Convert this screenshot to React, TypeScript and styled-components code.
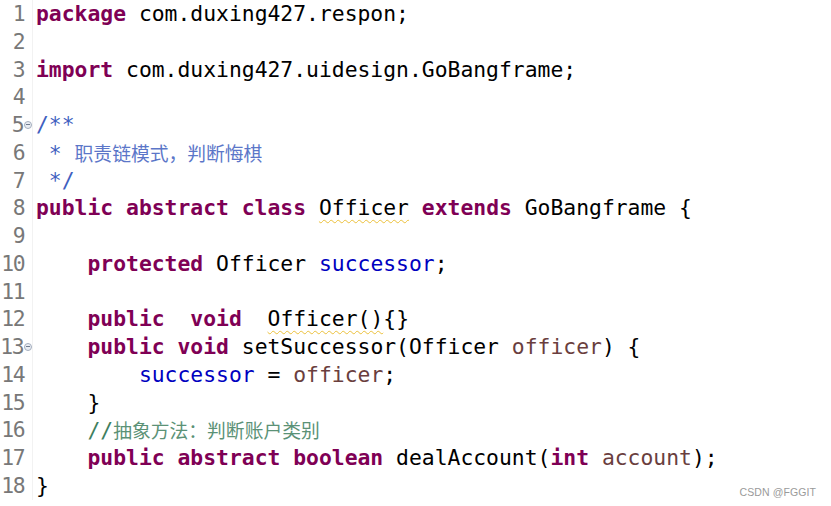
import React from "react";
import styled, { createGlobalStyle } from "styled-components";

const Global = createGlobalStyle`
  html, body { margin: 0; padding: 0; background: #ffffff; }
  body { width: 831px; height: 506px; overflow: hidden; }
`;

type Kind = "plain" | "kw" | "field" | "param" | "doc" | "comment" | "warn";
type Tok = { t: string; k?: Kind; cjk?: boolean };
type LineData = { toks: Tok[]; fold?: boolean };

const lines: LineData[] = [
  { toks: [{ t: "package", k: "kw" }, { t: " com.duxing427.respon;" }] },
  { toks: [] },
  { toks: [{ t: "import", k: "kw" }, { t: " com.duxing427.uidesign.GoBangframe;" }] },
  { toks: [] },
  { fold: true, toks: [{ t: "/**", k: "doc" }] },
  { toks: [{ t: " * ", k: "doc" }, { t: "职责链模式，判断悔棋", k: "doc", cjk: true }] },
  { toks: [{ t: " */", k: "doc" }] },
  {
    toks: [
      { t: "public abstract class", k: "kw" },
      { t: " " },
      { t: "Officer", k: "warn" },
      { t: " " },
      { t: "extends", k: "kw" },
      { t: " GoBangframe {" },
    ],
  },
  { toks: [] },
  { toks: [{ t: "    " }, { t: "protected", k: "kw" }, { t: " Officer " }, { t: "successor", k: "field" }, { t: ";" }] },
  { toks: [] },
  { toks: [{ t: "    " }, { t: "public  void", k: "kw" }, { t: "  " }, { t: "Officer()", k: "warn" }, { t: "{}" }] },
  {
    fold: true,
    toks: [
      { t: "    " },
      { t: "public void", k: "kw" },
      { t: " setSuccessor(Officer " },
      { t: "officer", k: "param" },
      { t: ") {" },
    ],
  },
  { toks: [{ t: "        " }, { t: "successor", k: "field" }, { t: " = " }, { t: "officer", k: "param" }, { t: ";" }] },
  { toks: [{ t: "    }" }] },
  { toks: [{ t: "    " }, { t: "//", k: "comment" }, { t: "抽象方法：判断账户类别", k: "comment", cjk: true }] },
  {
    toks: [
      { t: "    " },
      { t: "public abstract boolean", k: "kw" },
      { t: " dealAccount(" },
      { t: "int", k: "kw" },
      { t: " " },
      { t: "account", k: "param" },
      { t: ");" },
    ],
  },
  { toks: [{ t: "}" }] },
];

const colors: Record<Kind, string> = {
  plain: "#000000",
  kw: "#7f0055",
  field: "#0000c0",
  param: "#6a3e3e",
  doc: "#3f5fbf",
  comment: "#3f7f5f",
  warn: "#000000",
};

const Page = styled.div`
  position: relative;
  width: 831px;
  height: 506px;
  background: #ffffff;
  overflow: hidden;
`;

const Editor = styled.div`
  display: flex;
  flex-direction: column;
  font-family: "DejaVu Sans Mono", "Liberation Mono", monospace;
  font-size: 21.36px;
  line-height: 27.75px;
`;

const Row = styled.div`
  display: flex;
  height: 27.75px;
`;

const Gutter = styled.div`
  display: flex;
  width: 33px;
  flex: none;
  border-right: 1px solid #f2f2f2;
  box-sizing: border-box;
`;

const Num = styled.div`
  width: 24px;
  display: flex;
  justify-content: flex-end;
  color: #787878;
  white-space: pre;
  letter-spacing: -1.5px;
`;

const FoldSlot = styled.div`
  flex: 1;
  display: flex;
  align-items: center;
  padding-left: 1px;
`;

const FoldMark = styled.span`
  width: 8px;
  height: 8px;
  box-sizing: border-box;
  border-radius: 50%;
  border: 1px solid #a3adbd;
  background: #e9edf3;
  position: relative;
  &::after {
    content: "";
    position: absolute;
    left: 1px;
    right: 1px;
    top: 2.5px;
    height: 1px;
    background: #6f7b8f;
  }
`;

const Code = styled.div`
  padding-left: 3px;
  white-space: pre;
`;

const Token = styled.span<{ $kind: Kind; $cjk?: boolean }>`
  color: ${(p) => colors[p.$kind]};
  font-weight: ${(p) => (p.$kind === "kw" ? 700 : 400)};
  ${(p) =>
    p.$cjk
      ? `font-family: "Noto Sans CJK SC", sans-serif; font-size: 18.8px; opacity: 0.85;`
      : ""}
  ${(p) =>
    p.$kind === "warn"
      ? `text-decoration: underline wavy #ebc03a; text-decoration-thickness: 1px; text-underline-offset: 4px;`
      : ""}
`;

const Watermark = styled.div`
  position: absolute;
  right: 15px;
  bottom: 8px;
  font-family: "Liberation Sans", Arial, sans-serif;
  font-size: 10.5px;
  color: #9a9a9a;
  letter-spacing: 0.1px;
`;

export default function App() {
  return (
    <Page>
      <Global />
      <Editor>
        {lines.map((ln, i) => (
          <Row key={i}>
            <Gutter>
              <Num>{i + 1}</Num>
              <FoldSlot>{ln.fold && <FoldMark />}</FoldSlot>
            </Gutter>
            <Code>
              {ln.toks.map((tk, j) => (
                <Token key={j} $kind={tk.k ?? "plain"} $cjk={tk.cjk}>
                  {tk.t}
                </Token>
              ))}
            </Code>
          </Row>
        ))}
      </Editor>
      <Watermark>CSDN @FGGIT</Watermark>
    </Page>
  );
}
